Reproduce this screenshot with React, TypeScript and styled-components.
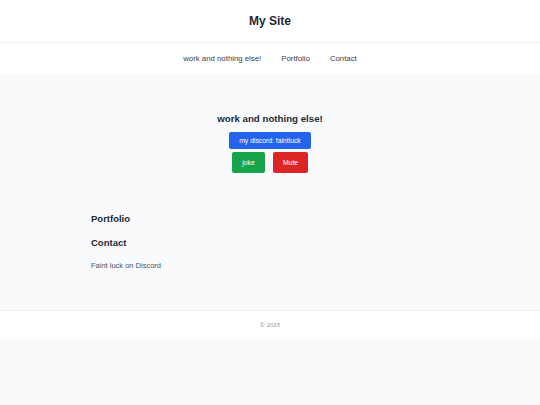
import React from 'react'
import styled, { createGlobalStyle } from 'styled-components'

const GlobalStyle = createGlobalStyle`
  html, body {
    margin: 0;
    padding: 0;
    background: #f9fafb;
    font-family: "Liberation Sans", Arial, sans-serif;
    color: #1f2937;
  }
`

const Header = styled.header`
  height: 42px;
  background: #ffffff;
  border-bottom: 1px solid #eef0f3;
  display: flex;
  align-items: center;
  justify-content: center;
`

const SiteTitle = styled.h1`
  margin: 0;
  font-size: 12px;
  font-weight: 700;
  color: #1f2937;
`

const Nav = styled.nav`
  height: 31px;
  background: #ffffff;
  display: flex;
  align-items: center;
  justify-content: center;
  gap: 20px;
`

const NavLink = styled.a`
  font-size: 7.8px;
  color: #374151;
  text-decoration: none;
`

const Main = styled.main`
  padding: 39px 91px 39px;
`

const Hero = styled.section`
  display: flex;
  flex-direction: column;
  align-items: center;
`

const HeroTitle = styled.h2`
  margin: 0;
  font-size: 9.7px;
  line-height: 12px;
  font-weight: 700;
  color: #1f2937;
`

const ButtonRow = styled.div`
  display: flex;
  gap: 8px;
  margin-top: 3px;
`

const Button = styled.button<{ $bg: string; $w: number; $h: number }>`
  width: ${p => p.$w}px;
  height: ${p => p.$h}px;
  border: none;
  border-radius: 2px;
  background: ${p => p.$bg};
  color: #ffffff;
  font-family: "Liberation Sans", Arial, sans-serif;
  font-size: 6.8px;
  padding: 0;
  cursor: pointer;
`

const DiscordButton = styled(Button)`
  margin-top: 7px;
`

const Section = styled.section`
  margin-top: 39px;
`

const SectionTitle = styled.h3`
  margin: 0 0 10px;
  font-size: 9.5px;
  line-height: 14px;
  font-weight: 700;
  color: #1f2937;
`

const Text = styled.p`
  margin: 11px 0 0;
  font-size: 7.5px;
  line-height: 10px;
  color: #4b5563;
`

const Footer = styled.footer`
  height: 28px;
  background: #ffffff;
  border-top: 1px solid #eef0f3;
  display: flex;
  align-items: center;
  justify-content: center;
  font-family: "Open Sans", sans-serif;
  font-size: 6px;
  color: #8a919c;
`

export default function App() {
  return (
    <>
      <GlobalStyle />
      <Header>
        <SiteTitle>My Site</SiteTitle>
      </Header>
      <Nav>
        <NavLink href="#work">work and nothing else!</NavLink>
        <NavLink href="#portfolio">Portfolio</NavLink>
        <NavLink href="#contact">Contact</NavLink>
      </Nav>
      <Main>
        <Hero id="work">
          <HeroTitle>work and nothing else!</HeroTitle>
          <DiscordButton $bg="#2563eb" $w={82} $h={17}>my discord: faintluck</DiscordButton>
          <ButtonRow>
            <Button $bg="#16a34a" $w={33} $h={21}>joke</Button>
            <Button $bg="#dc2626" $w={35} $h={21}>Mute</Button>
          </ButtonRow>
        </Hero>
        <Section>
          <SectionTitle id="portfolio">Portfolio</SectionTitle>
          <SectionTitle id="contact" style={{ marginBottom: 0 }}>Contact</SectionTitle>
          <Text>Faint luck on Discord</Text>
        </Section>
      </Main>
      <Footer>© 2025</Footer>
    </>
  )
}
